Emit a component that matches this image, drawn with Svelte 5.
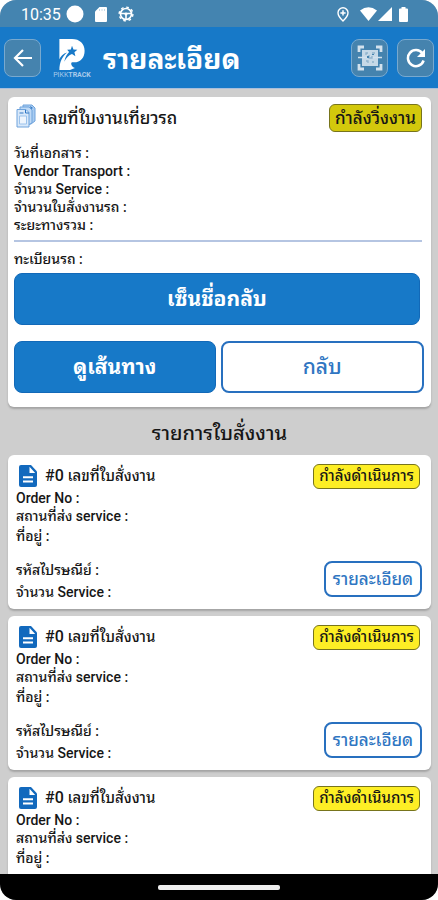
<script>
  const jobFields = ['วันที่เอกสาร :', 'Vendor Transport :', 'จำนวน Service :', 'จำนวนใบสั่งงานรถ :', 'ระยะทางรวม :'];
  const orders = [
    { id: 1, expanded: true },
    { id: 2, expanded: true },
    { id: 3, expanded: false },
  ];
</script>

<div class="phone">
  <div class="status">
    <span class="time">10:35</span>
    <svg width="18" height="18" viewBox="0 0 18 18"><circle cx="9" cy="9" r="8.5" fill="#fff" /></svg>
    <svg class="sd" width="12" height="15" viewBox="0 0 12 15"><path d="M4.500 0H11a1 1 0 0 1 1 1v13a1 1 0 0 1-1 1H1a1 1 0 0 1-1-1V4.500z" fill="#fff" /><path d="M4.500 2v2M7 2v2M9.500 2v2" stroke="#c4dae7" /></svg>
    <svg class="wheel" width="16" height="16" viewBox="0 0 16 16" fill="none" stroke="#fff"><circle cx="8" cy="8" r="5.500" stroke-width="1.700" /><circle cx="8" cy="8" r="6.900" stroke-width="1.400" stroke-dasharray="2.700 2.720" /><path d="M3 7.500h10M8 8v5" stroke-width="1.600" /><circle cx="8" cy="8" r="1.500" fill="#fff" stroke="none" /></svg>
    <span class="grow"></span>
    <svg class="pin" width="12" height="15" viewBox="0 0 12 15"><path d="M6 .8a5 5 0 0 0-5 5C1 9.500 6 14 6 14s5-4.500 5-8.200a5 5 0 0 0-5-5z" fill="none" stroke="#fff" stroke-width="1.400" /><path d="M6 3.200v5.400M3.400 5.900h5.200" stroke="#fff" stroke-width="1.500" /></svg>
    <svg width="17" height="14" viewBox="0 0 17 14"><path d="M0 3.500Q8.500-3 17 3.500L8.500 14z" fill="#fff" /></svg>
    <svg class="signal" width="14" height="14" viewBox="0 0 14 14"><path d="M14 0v14H0z" fill="#fff" /></svg>
    <svg class="battery" width="9" height="15" viewBox="0 0 9 15"><path d="M2.500 0h4v1.500H8a1 1 0 0 1 1 1V14a1 1 0 0 1-1 1H1a1 1 0 0 1-1-1V2.500a1 1 0 0 1 1-1h1.500z" fill="#fff" /></svg>
  </div>

  <header>
    <button class="tool" aria-label="Back">
      <svg width="20" height="18" viewBox="0 0 20 18" fill="none" stroke="#fff" stroke-width="2.200"><path d="M10 1L2 9l8 8M2 9h17" /></svg>
    </button>
    <div class="logo">
      <svg width="28" height="32" viewBox="0 0 28 33"><path d="M1 0h13c8 0 13 5 13 12 0 7-4 12-11 12h-2c-2 1 0 5 3 6l-5 2H1c0-8 3-14 8-18-4 1-7 4-8 7z" fill="#fff" /><path d="M14 7l1.500 3.700 4 .3-3 2.700 1 4-3.500-2.200c-3 1-6 4-8 8 1-5 3-8 5-10l-2-2.300 3.800-.3z" fill="#1779c8" /></svg>
      <span>PIKK<b>TRACK</b></span>
    </div>
    <h1>รายละเอียด</h1>
    <button class="tool" aria-label="Scan">
      <svg width="26" height="26" viewBox="0 0 26 26" fill="none" stroke="#d3e2ed"><path d="M2 7V2h5M19 2h5v5M24 19v5h-5M7 24H2v-5" stroke-width="2.800" /><rect x="5" y="5" width="16" height="16" fill="#c6d9e7" stroke="none" /><path d="M1 12.500h24" stroke-width="1.500" /><path d="M9 10V8h2M15 8h3M12 10v3h3v-2M9 16h2v2M15 17h2" stroke="#8fb2cb" stroke-width="1.300" /><path d="M10 11h2v2h-2zM15 9h2v1h-2z" fill="#4583ae" stroke="none" /></svg>
    </button>
    <button class="tool" aria-label="Refresh">
      <svg width="20" height="20" viewBox="0 0 20 20"><path d="M16.300 5.200A8 8 0 1 0 17.600 12.500" fill="none" stroke="#fff" stroke-width="2.500" /><path d="M19 1v8h-8z" fill="#fff" /></svg>
    </button>
  </header>

  <main>
    <section class="card job">
      <div class="top">
        <svg class="docs" width="20" height="24" viewBox="0 0 20 24"><path d="M7 1h9l3 3v13l-4 3H7z" fill="#a9ccf1" stroke="#6fa3dc" /><path d="M4 3h9l3 3v13l-4 2H4z" fill="#bfdaf6" stroke="#6fa3dc" /><path d="M1 5.500h9l3 3V23H1z" fill="#d9e9fa" stroke="#6fa3dc" /><path d="M9.500 6v3h3.500M3.500 9h4" fill="none" stroke="#2f76c4" /><path d="M3.500 12h7v8h-7z" fill="#eef5fd" stroke="#9cc3ec" /><path d="M14 2l3 2-2 1z" fill="#2f76c4" /></svg>
        <h2>เลขที่ใบงานเที่ยวรถ</h2>
        <span class="badge running">กำลังวิ่งงาน</span>
      </div>
      <div class="fields">
        {#each jobFields as field}<p>{field}</p>{/each}
      </div>
      <hr />
      <p class="plate">ทะเบียนรถ :</p>
      <button class="solid sign">เซ็นชื่อกลับ</button>
      <div class="pair">
        <button class="solid">ดูเส้นทาง</button>
        <button class="outline">กลับ</button>
      </div>
    </section>

    <h2 class="heading">รายการใบสั่งงาน</h2>

    {#each orders as order (order.id)}
      <section class="card order">
        <div class="top">
          <svg class="doc" width="18" height="22" viewBox="0 0 18 22"><path d="M2 0h10l6 6.500V20a2 2 0 0 1-2 2H2a2 2 0 0 1-2-2V2a2 2 0 0 1 2-2z" fill="#1269bd" /><path d="M10.500 1.800V8h5.700zM4 11.200h10v2H4zM4 15.600h10v2H4z" fill="#fff" /></svg>
          <h3><b>#0</b> เลขที่ใบสั่งงาน</h3>
          <span class="badge">กำลังดำเนินการ</span>
        </div>
        <p>Order No :</p>
        <p>สถานที่ส่ง service :</p>
        <p class="address">ที่อยู่ :</p>
        {#if order.expanded}
          <div class="bottom">
            <div>
              <p>รหัสไปรษณีย์ :</p>
              <p>จำนวน Service :</p>
            </div>
            <button class="outline detail">รายละเอียด</button>
          </div>
        {/if}
      </section>
    {/each}
  </main>

  <div class="navbar"><span></span></div>
</div>

<style>
  :global(body) { margin: 0; background: #fff; }
  .phone {
    height: 100vh;
    display: flex;
    flex-direction: column;
    overflow: hidden;
    border-radius: 16px;
    background: #cecece;
    color: #161616;
    font-family: Roboto, "Noto Sans Thai Looped", "Noto Sans Thai", "Noto Sans", sans-serif;
  }
  * { box-sizing: border-box; }
  p, h1, h2, h3 { margin: 0; white-space: nowrap; }
  svg { display: block; flex: none; }
  button { margin: 0; padding: 0; font-family: inherit; cursor: pointer; }
  .status {
    flex: none;
    height: 27px;
    padding: 1px 30px 0 21px;
    display: flex;
    align-items: center;
    background: #4484b0;
    color: #fff;
  }
  .time { font-size: 16px; margin-right: 5px; }
  .sd { margin-left: 11px; }
  .wheel { margin-left: 11px; }
  .grow { flex: 1; }
  .pin { margin-right: 11px; }
  .signal { margin-left: 1px; }
  .battery { margin-left: 7px; }
  header {
    flex: none;
    height: 62px;
    padding: 0 4px;
    display: flex;
    align-items: center;
    background: #1779c8;
    border-bottom: 1px solid #a9bfdc;
  }
  .tool {
    flex: none;
    width: 37px;
    height: 38px;
    display: grid;
    place-items: center;
    background: #4583ae;
    border: 1px solid #78a9cf;
    border-radius: 8px;
  }
  .tool + .tool { margin-left: 9px; }
  .logo {
    width: 38px;
    margin: 0 12px;
    padding-top: 3px;
    display: flex;
    flex-direction: column;
    align-items: center;
    color: #a9cbea;
    font-size: 7px;
    line-height: 8px;
  }
  h1 { flex: 1; padding-top: 4px; color: #fff; font-size: 28px; line-height: 40px; font-weight: 700; }
  main { flex: 1; min-height: 0; overflow: hidden; padding: 8px 7px 0 8px; }
  .card {
    background: #fff;
    border-radius: 6px;
    box-shadow: 0 2px 2px #a4a4a4;
  }
  .top { display: flex; align-items: center; }
  .top h2, .top h3 { flex: 1; }
  .job { padding: 6px 7px 14px 6px; }
  .job .top { height: 30px; padding-right: 2px; }
  .docs { margin: 0 6px 4px 2px; }
  .top h2 { font-size: 17px; line-height: 28px; font-weight: 500; }
  .badge {
    display: grid;
    place-items: center;
    min-width: 107px;
    height: 25px;
    background: #fdee25;
    border: 1px solid #77741c;
    border-radius: 6px;
    font-size: 15px;
    line-height: 22px;
    font-weight: 500;
    white-space: nowrap;
  }
  .running { min-width: 93px; height: 28px; background: #d3c80c; font-size: 17px; }
  .fields { margin-top: 11px; }
  .fields p, .plate, .order p { font-size: 14px; line-height: 18px; font-weight: 500; }
  hr { margin: 6px 2px 8px 0; border: 0; height: 2px; background: #b5c5e2; }
  .solid, .outline { border-radius: 8px; font-size: 21px; line-height: 28px; font-weight: 700; }
  .solid { height: 52px; border: 1px solid #1269b8; background: #1779c8; color: #fff; }
  .outline { height: 52px; border: 2px solid #2870bf; background: #fff; color: #2f76c2; font-weight: 500; }
  .sign { display: block; width: calc(100% - 4px); margin-top: 5px; }
  .pair { display: flex; gap: 5px; margin-top: 16px; }
  .pair button { flex: 1; }
  .heading { margin: 12px 0 8px; text-align: center; font-size: 20px; line-height: 28px; font-weight: 500; }
  .order { min-height: 154px; margin-bottom: 7px; padding: 8px 9px 6px 8px; }
  .order .top { height: 26px; padding-right: 2px; }
  .doc { margin: 0 8px 0 3px; }
  h3 { font-size: 15px; line-height: 24px; font-weight: 500; }
  h3 b { font-size: 16px; font-weight: 500; }
  .order .address { line-height: 22px; }
  .bottom { display: flex; justify-content: space-between; margin-top: 12px; }
  .order .bottom p { line-height: 22px; }
  .detail { width: 98px; height: 36px; margin-top: 2px; font-size: 17px; line-height: 24px; }
  .navbar {
    flex: none;
    height: 26px;
    display: grid;
    place-items: center;
    background: #000;
  }
  .navbar span { width: 28%; height: 5px; border-radius: 2px; background: #eee; }
</style>
